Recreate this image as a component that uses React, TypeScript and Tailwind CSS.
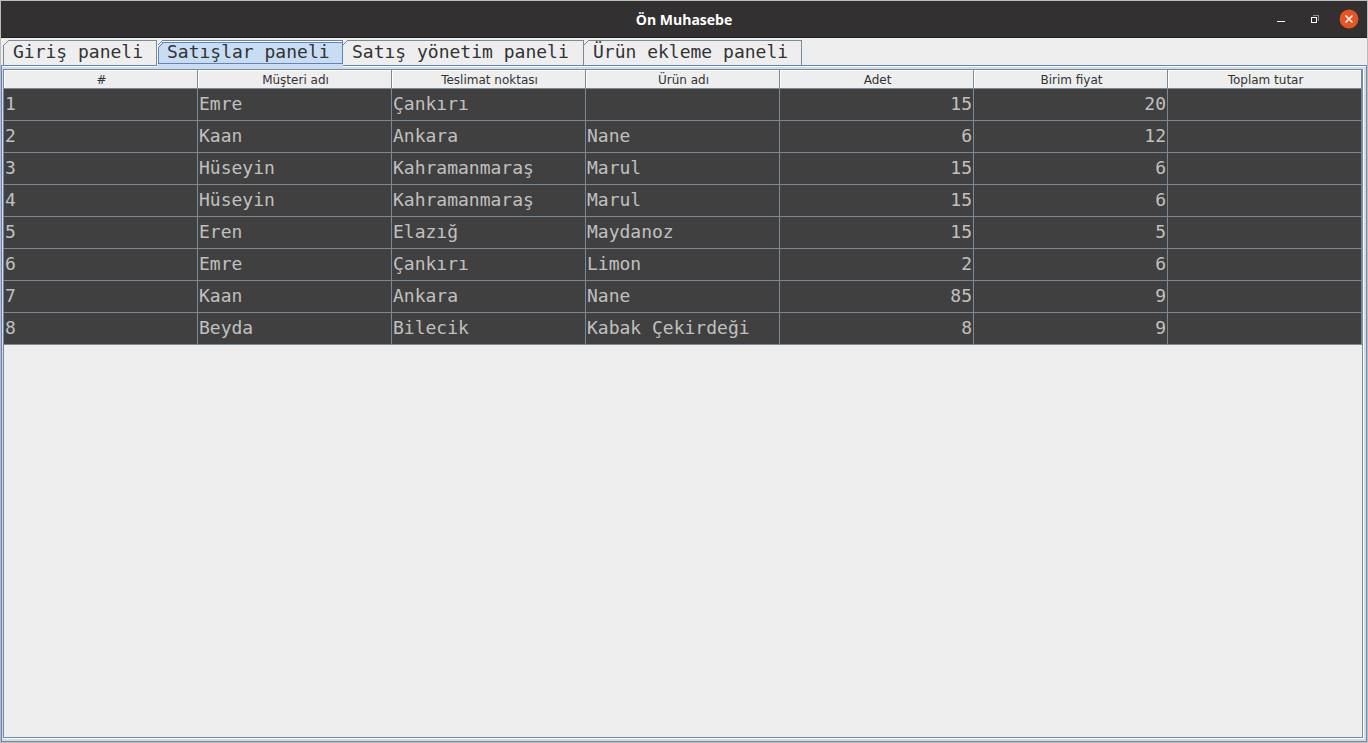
import { useState } from "react";

const tabs = [
  { label: "Giriş paneli", width: "w-[154px]" },
  { label: "Satışlar paneli", width: "w-[186px]" },
  { label: "Satış yönetim paneli", width: "-ml-px w-[242px]" },
  { label: "Ürün ekleme paneli", width: "-ml-px w-[219px]" },
];

const columns = ["#", "Müşteri adı", "Teslimat noktası", "Ürün adı", "Adet", "Birim fiyat", "Toplam tutar"];

const rows = [
  ["1", "Emre", "Çankırı", "", "15", "20", ""],
  ["2", "Kaan", "Ankara", "Nane", "6", "12", ""],
  ["3", "Hüseyin", "Kahramanmaraş", "Marul", "15", "6", ""],
  ["4", "Hüseyin", "Kahramanmaraş", "Marul", "15", "6", ""],
  ["5", "Eren", "Elazığ", "Maydanoz", "15", "5", ""],
  ["6", "Emre", "Çankırı", "Limon", "2", "6", ""],
  ["7", "Kaan", "Ankara", "Nane", "85", "9", ""],
  ["8", "Beyda", "Bilecik", "Kabak Çekirdeği", "8", "9", ""],
];

function TitleBar() {
  return (
    <header className="grid h-[37px] grid-cols-[1fr_auto_1fr] items-center border-b border-[#1f1e1e] bg-[#323030]">
      <span />
      <h1 className="pt-0.5 font-['Open_Sans',sans-serif] text-sm font-bold text-white">Ön Muhasebe</h1>
      <div className="flex items-center justify-end gap-3.5 pr-2">
        <button type="button" aria-label="Küçült" className="flex size-5 items-center justify-center">
          <svg width="20" height="20" viewBox="0 0 20 20" shapeRendering="crispEdges">
            <rect x="6" y="12" width="8" height="1" fill="#fff" />
          </svg>
        </button>
        <button type="button" aria-label="Geri yükle" className="flex size-5 items-center justify-center">
          <svg width="20" height="20" viewBox="0 0 20 20" shapeRendering="crispEdges" fill="none">
            <path d="M8 6.5h5.5V12" stroke="#8f8e8e" />
            <path d="M6.5 8.5h5v5h-5z" stroke="#fff" />
          </svg>
        </button>
        <button type="button" aria-label="Kapat" className="flex size-5 items-center justify-center">
          <svg width="20" height="20" viewBox="0 0 20 20">
            <circle cx="10" cy="10" r="9.4" fill="#e95420" />
            <path d="M6.5 6.5l7 7M13.5 6.5l-7 7" stroke="#fff" strokeWidth="1.6" />
          </svg>
        </button>
      </div>
    </header>
  );
}

function TabCorner({ active, first }: { active: boolean; first: boolean }) {
  return (
    <svg
      className="absolute -top-px left-0"
      width="8"
      height="25"
      viewBox="0 0 8 25"
      fill="none"
      shapeRendering="crispEdges"
    >
      <path d="M0 0h6L0 6z" fill="#eeeeee" />
      {active ? (
        <>
          <path d="M.5 25V6.5l5-5H8" stroke="#ffffff" />
          <path d="M.5 5.5l5-5H8M1.5 24V7.5l5-5H8" stroke="#6382bf" />
        </>
      ) : (
        <>
          <path d={first ? "M.5 25V5" : "M.5 25V0"} stroke="#7a8a99" />
          <path d="M.5 5.5l5-5H8" stroke="#7a8a99" />
        </>
      )}
    </svg>
  );
}

export default function App() {
  const [active, setActive] = useState(1);
  return (
    <div className="flex min-h-screen flex-col border border-[#bdbcba] bg-[#eeeeee]">
      <TitleBar />
      <div
        role="tablist"
        className="flex h-[27px] items-start pt-0.5 pl-0.5 font-['DejaVu_Sans_Mono',monospace] text-lg leading-[22px] text-[#333333]"
      >
        {tabs.map((tab, i) => (
          <button
            key={tab.label}
            type="button"
            role="tab"
            aria-selected={i === active}
            onClick={() => setActive(i)}
            className={`relative flex justify-start border-t border-r pl-2.5 whitespace-nowrap ${tab.width} ${
              i === active
                ? "z-10 h-6 border-b border-[#6382bf] bg-[#c8ddf2] shadow-[inset_0_1px_0_#ffffff,inset_0_2px_0_#6382bf,0_1px_0_#c8ddf2,0_2px_0_#c8ddf2,0_3px_0_#c8ddf2]"
                : "h-[25px] border-[#7a8a99] bg-[#eeeeee]"
            }`}
          >
            <TabCorner active={i === active} first={i === 0} />
            {tab.label}
          </button>
        ))}
      </div>
      <main className="flex grow flex-col border-t border-r border-b border-l border-t-[#6382bf] border-r-[#7a8a99] border-b-[#7a8a99] border-l-[#6382bf] bg-[#c8ddf2]">
        <div className="h-px bg-white" />
        <div className="flex grow flex-col pt-0.5 pr-0.5 pb-0.5 pl-px">
          <div className="flex grow flex-col border-r border-b border-white">
            <div className="grow border border-[#7a8a99] bg-[#eeeeee]">
              <table className="w-full table-fixed border-separate border-spacing-0 text-[#333333]">
                <thead>
                  <tr>
                    {columns.map((name) => (
                      <th
                        key={name}
                        scope="col"
                        className="h-[19px] border-r border-b border-[#7a8a99] pt-0.5 pr-0 pb-0 pl-0.5 text-center font-['DejaVu_Sans',sans-serif] text-xs leading-4 font-normal shadow-[inset_1px_1px_0_#ffffff]"
                      >
                        {name}
                      </th>
                    ))}
                  </tr>
                </thead>
                <tbody className="bg-[#404040] font-['DejaVu_Sans_Mono',monospace] text-lg text-[#c0c0c0]">
                  {rows.map((row) => (
                    <tr key={row[0]}>
                      {row.map((value, i) => (
                        <td
                          key={columns[i]}
                          className={`h-8 border-r border-b border-[#7a8a99] px-px pt-0 pb-0.5 leading-7 ${
                            i > 3 ? "text-right" : "text-left"
                          }`}
                        >
                          {value}
                        </td>
                      ))}
                    </tr>
                  ))}
                </tbody>
              </table>
            </div>
          </div>
        </div>
      </main>
    </div>
  );
}
